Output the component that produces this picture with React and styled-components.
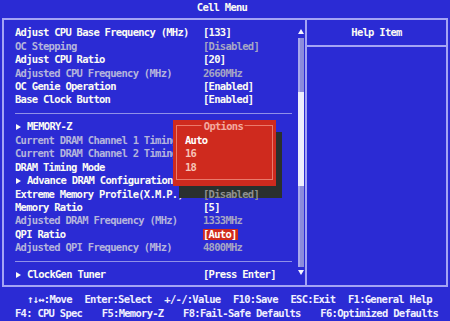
import React from 'react'
import styled, { createGlobalStyle } from 'styled-components'

const Global = createGlobalStyle`
  html, body {
    margin: 0;
    padding: 0;
    background: #2b2bd4;
  }
`

const Screen = styled.div`
  position: relative;
  width: 450px;
  height: 321px;
  overflow: hidden;
  background: #2b2bd4;
  color: #fbfbf4;
  font-family: "DejaVu Sans Mono", "Liberation Mono", monospace;
  font-weight: bold;
  font-size: 10.5px;
  letter-spacing: -0.72px;
  display: flex;
  flex-direction: column;
`

const TitleBar = styled.div`
  height: 18px;
  line-height: 15px;
  text-align: center;
  padding-right: 6px;
`

const Frame = styled.div`
  box-sizing: border-box;
  height: 269px;
  margin: 0 2px;
  border: 2px solid #a4a4f4;
  display: flex;
`

const LeftPanel = styled.div`
  flex: 1;
  display: flex;
  padding: 0 1px 0 11px;
`

const List = styled.div`
  flex: 1;
  padding: 6.3px 6px 0 0;
`

const Row = styled.div`
  height: 13.44px;
  line-height: 13.44px;
  display: grid;
  grid-template-columns: 188px 1fr;
  white-space: nowrap;
`

const Label = styled.span`
  display: flex;
  align-items: center;
  color: ${p => (p.$dim ? '#b4b4dc' : '#fbfbf4')};
`

const Arrow = styled.span`
  width: 0;
  height: 0;
  margin: 0 6px 0 1px;
  border-top: 3px solid transparent;
  border-bottom: 3px solid transparent;
  border-left: 5px solid #fbfbf4;
`

const Value = styled.span`
  justify-self: start;
  color: ${p => (p.$dim ? '#a6a6c4' : '#fbfbf4')};
  ${p => p.$shaded && 'position: relative; z-index: 3; color: #8f9090;'}
  ${p =>
    p.$selected &&
    `
    background: #d02a1c;
    color: #fff;
    height: 11px;
    line-height: 11px;
    margin-top: 1.5px;
    padding: 0 1px 0 0;
  `}
`

const Separator = styled.div`
  height: 13.44px;
  display: flex;
  align-items: center;
  &::after {
    content: '';
    flex: 1;
    height: 1.5px;
    background: #9090e8;
  }
`

const ScrollCol = styled.div`
  width: 6px;
  display: flex;
  flex-direction: column;
  align-items: center;
  padding-top: 9px;
`

const ScrollArrow = styled.span`
  width: 0;
  height: 0;
  border-left: 3px solid transparent;
  border-right: 3px solid transparent;
  ${p =>
    p.$down
      ? 'border-top: 5px solid #f4f4ff; margin-top: 3px;'
      : 'border-bottom: 5px solid #f4f4ff; margin-bottom: 4px;'}
`

const Track = styled.div`
  width: 6px;
  height: 229px;
  background: #8c8cdc;
  box-shadow: inset 2px 0 0 #a8a8ec;
  display: flex;
  flex-direction: column;
`

const Thumb = styled.div`
  margin-top: 54px;
  height: 94px;
  background: #eeeefc;
`

const RightPanel = styled.div`
  box-sizing: border-box;
  width: 141px;
  border-left: 2px solid #a4a4f4;
`

const HelpHeader = styled.div`
  height: 24.5px;
  line-height: 24px;
  text-align: center;
  border-bottom: 2px solid #a4a4f4;
`

const Footer = styled.div`
  padding-top: 6.3px;
  display: flex;
  flex-direction: column;
`

const FooterLine = styled.div`
  height: 13.5px;
  line-height: 13.5px;
  display: flex;
  justify-content: space-between;
  padding: ${p => p.$pad};
  white-space: pre;
  color: #f0f0ff;
`

const Popup = styled.div`
  position: absolute;
  left: 173px;
  top: 120px;
  width: 103px;
  height: 66px;
  z-index: 2;
  box-sizing: border-box;
  background: #cf2a1e;
  box-shadow: 6px 12px 0 #2a302e;
  padding: 5px 3.5px 6px 3px;
  display: flex;
`

const PopupInner = styled.div`
  position: relative;
  flex: 1;
  border: 1px solid #ea7a6c;
  padding: 8px 0 0 8px;
`

const Legend = styled.span`
  position: absolute;
  top: -6px;
  left: 50%;
  transform: translateX(-52%);
  padding: 0 2px;
  line-height: 13px;
  background: #cf2a1e;
  color: #f4aaa0;
`

const Option = styled.div`
  height: 13.4px;
  line-height: 13.4px;
  color: ${p => (p.$active ? '#ffffff' : '#f6c4b8')};
`

const cpuRows = [
  { label: 'Adjust CPU Base Frequency (MHz)', value: '[133]' },
  { label: 'OC Stepping', value: '[Disabled]', dim: true },
  { label: 'Adjust CPU Ratio', value: '[20]' },
  { label: 'Adjusted CPU Frequency (MHz)', value: '2660MHz', dim: true },
  { label: 'OC Genie Operation', value: '[Enabled]' },
  { label: 'Base Clock Button', value: '[Enabled]' },
]

const memRows = [
  { label: 'MEMORY-Z', sub: true },
  { label: 'Current DRAM Channel 1 Timing', dim: true },
  { label: 'Current DRAM Channel 2 Timing', dim: true },
  { label: 'DRAM Timing Mode', value: '[Auto]' },
  { label: 'Advance DRAM Configuration', sub: true },
  { label: 'Extreme Memory Profile(X.M.P.)', value: '[Disabled]', shaded: true },
  { label: 'Memory Ratio', value: '[5]' },
  { label: 'Adjusted DRAM Frequency (MHz)', value: '1333MHz', dim: true },
  { label: 'QPI Ratio', value: '[Auto]', selected: true },
  { label: 'Adjusted QPI Frequency (MHz)', value: '4800MHz', dim: true },
]

const MenuRow = ({ row }) => (
  <Row>
    <Label $dim={row.dim}>
      {row.sub && <Arrow />}
      {row.label}
    </Label>
    {row.value ? (
      <Value $dim={row.dim} $shaded={row.shaded} $selected={row.selected}>
        {row.value}
      </Value>
    ) : (
      <span />
    )}
  </Row>
)

const App = () => {
  return (
    <Screen>
      <Global />
      <TitleBar>Cell Menu</TitleBar>
      <Frame>
        <LeftPanel>
          <List>
            {cpuRows.map(r => (
              <MenuRow key={r.label} row={r} />
            ))}
            <Separator />
            {memRows.map(r => (
              <MenuRow key={r.label} row={r} />
            ))}
            <Separator />
            <MenuRow row={{ label: 'ClockGen Tuner', value: '[Press Enter]', sub: true }} />
          </List>
          <ScrollCol>
            <ScrollArrow />
            <Track>
              <Thumb />
            </Track>
            <ScrollArrow $down />
          </ScrollCol>
        </LeftPanel>
        <RightPanel>
          <HelpHeader>Help Item</HelpHeader>
        </RightPanel>
      </Frame>
      <Footer>
        <FooterLine $pad="0 18px 0 27px">
          <span>↑↓↔:Move</span>
          <span>Enter:Select</span>
          <span>+/-/:Value</span>
          <span>F10:Save</span>
          <span>ESC:Exit</span>
          <span>F1:General Help</span>
        </FooterLine>
        <FooterLine $pad="0 12px 0 15px">
          <span>F4: CPU Spec</span>
          <span>F5:Memory-Z</span>
          <span>F8:Fail-Safe Defaults</span>
          <span>F6:Optimized Defaults</span>
        </FooterLine>
      </Footer>
      <Popup>
        <PopupInner>
          <Legend>Options</Legend>
          <Option $active>Auto</Option>
          <Option>16</Option>
          <Option>18</Option>
        </PopupInner>
      </Popup>
    </Screen>
  )
}

export default App
